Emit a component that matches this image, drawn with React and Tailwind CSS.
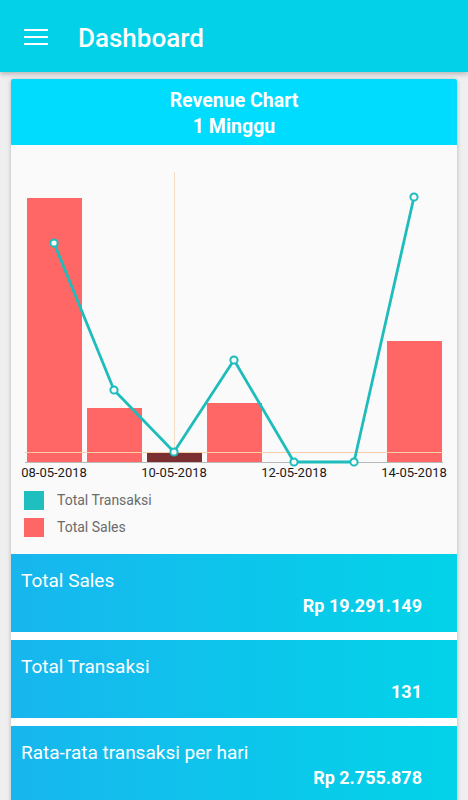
import React from 'react';

const bars = [
    { x: 16, top: 53, color: '#ff6666' },
    { x: 76, top: 263, color: '#ff6666' },
    { x: 136, top: 308, color: '#7b2f30' },
    { x: 196, top: 258, color: '#ff6666' },
    { x: 376, top: 196, color: '#ff6666' },
];

const points = [
    [43, 98],
    [103, 245],
    [163, 307],
    [223, 215],
    [283, 317],
    [343, 317],
    [403, 52],
];

const labels = [
    { x: 43, text: '08-05-2018' },
    { x: 163, text: '10-05-2018' },
    { x: 283, text: '12-05-2018' },
    { x: 403, text: '14-05-2018' },
];

function RevenueChart() {
    const base = 317;
    return (
        <svg width="446" height="338" className="block">
            <line x1="163.5" y1="27" x2="163.5" y2={base} stroke="#f3dcc4" strokeWidth="1" />
            {bars.map((b, i) => (
                <rect key={i} x={b.x} y={b.top} width="55" height={base - b.top} fill={b.color} />
            ))}
            <line x1="14" y1="307.5" x2="432" y2="307.5" stroke="#f9cfa8" strokeWidth="1" />
            <line x1="14" y1={base + 0.5} x2="432" y2={base + 0.5} stroke="#b9b9b9" strokeWidth="1" />
            <polyline
                points={points.map((p) => p.join(',')).join(' ')}
                fill="none"
                stroke="#1fbcbc"
                strokeWidth="2.8"
                strokeLinejoin="round"
            />
            {points.map((p, i) => (
                <circle key={i} cx={p[0]} cy={p[1]} r="3.6" fill="#fafafa" stroke="#1fbcbc" strokeWidth="2" />
            ))}
            {labels.map((l) => (
                <text
                    key={l.text}
                    x={l.x}
                    y="332"
                    textAnchor="middle"
                    fontSize="13"
                    fill="#1a1a1a"
                    fontFamily="Roboto, sans-serif"
                >
                    {l.text}
                </text>
            ))}
        </svg>
    );
}

function StatCard({ title, value }) {
    return (
        <div className="h-[78px] bg-gradient-to-r from-[#17b6ee] to-[#02d3e8] pl-[10px] pr-[35px] pt-[15px] text-white">
            <p className="text-[19px] leading-[24px]">{title}</p>
            <p className="text-right text-[18px] font-bold leading-[24px] mt-[1px]">{value}</p>
        </div>
    );
}

export default function App() {
    return (
        <div className="h-[800px] overflow-hidden bg-[#efefef] font-['Roboto',sans-serif]">
            <header className="relative z-10 h-[72px] bg-[#02d1e7] flex items-center shadow-[0_2px_5px_rgba(0,0,0,0.25)]">
                <div className="ml-[24px] mr-[30px] flex flex-col gap-[5px] w-[24px] mt-[2px]">
                    <span className="block h-[2px] bg-white" />
                    <span className="block h-[2px] bg-white" />
                    <span className="block h-[2px] bg-white" />
                </div>
                <h1 className="text-white text-[26px] font-medium leading-none mt-[4px]">Dashboard</h1>
            </header>

            <main className="px-[11px] pt-[7px]">
                <section className="bg-[#fafafa] rounded-[2px] shadow-[0_1px_4px_rgba(0,0,0,0.25)] overflow-hidden">
                    <div className="h-[66px] pt-[4px] bg-[#00dcfd] flex flex-col items-center justify-center text-white font-bold text-[19.5px] leading-[26px]">
                        <p>Revenue Chart</p>
                        <p>1 Minggu</p>
                    </div>

                    <RevenueChart />

                    <div className="px-[13px] pt-[8px] pb-[17px] flex flex-col gap-[8px] text-[14px] text-[#6b6b6b]">
                        <div className="flex items-center h-[19px]">
                            <span className="w-[20px] h-[19px] bg-[#1fbfbf] mr-[13px]" />
                            <span>Total Transaksi</span>
                        </div>
                        <div className="flex items-center h-[19px]">
                            <span className="w-[20px] h-[19px] bg-[#ff6666] mr-[13px]" />
                            <span>Total Sales</span>
                        </div>
                    </div>

                    <div className="flex flex-col gap-[8px] bg-white">
                        <StatCard title="Total Sales" value="Rp 19.291.149" />
                        <StatCard title="Total Transaksi" value="131" />
                        <StatCard title="Rata-rata transaksi per hari" value="Rp 2.755.878" />
                    </div>
                </section>
            </main>
        </div>
    );
}
